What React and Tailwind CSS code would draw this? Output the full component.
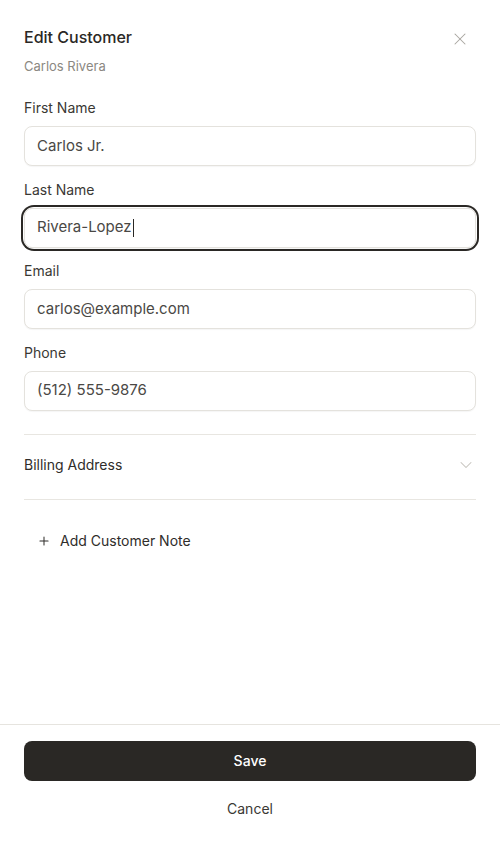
import { X, ChevronDown, Plus } from "lucide-react";

const Field = ({ label, value, focused }) => (
  <div className="flex flex-col gap-2">
    <label className="text-sm leading-5 text-[#3a3834]">{label}</label>
    <div
      className={
        focused
          ? "rounded-[10px] ring-2 ring-[#2a2825] ring-offset-[1px]"
          : ""
      }
    >
      <div className="flex h-10 items-center rounded-lg border border-[#e4e2dd] bg-white px-3 text-[15px] text-[#4a4845] shadow-[0_1px_1px_rgba(0,0,0,0.04)]">
        <span>{value}</span>
        {focused && <span className="ml-px h-[18px] w-px bg-[#2a2825]" />}
      </div>
    </div>
  </div>
);

export default function App() {
  return (
    <div
      className="flex min-h-screen flex-col bg-white"
      style={{ fontFamily: "Inter, 'Liberation Sans', sans-serif" }}
    >
      <div className="flex-1 px-6 pt-[27px]">
        <div className="flex items-start justify-between">
          <div>
            <h2 className="text-base font-medium leading-5 text-[#2a2825]">
              Edit Customer
            </h2>
            <p className="mt-[11px] text-[13px] leading-4 text-[#8b8882]">
              Carlos Rivera
            </p>
          </div>
          <button className="mt-[2px] mr-[6px] text-[#a8a6a0]">
            <X size={20} strokeWidth={1.25} />
          </button>
        </div>

        <div className="mt-6 flex flex-col gap-[13.5px]">
          <Field label="First Name" value="Carlos Jr." />
          <Field label="Last Name" value="Rivera-Lopez" focused />
          <Field label="Email" value="carlos@example.com" />
          <Field label="Phone" value="(512) 555-9876" />
        </div>

        <div className="mt-[23px] border-y border-[#e8e6e1]">
          <button className="flex h-16 w-full items-center justify-between pb-1 text-sm text-[#2f2d2a]">
            <span>Billing Address</span>
            <ChevronDown size={20} strokeWidth={1.25} className="text-[#c4c2bc]" />
          </button>
        </div>

        <button className="mt-[31px] flex items-center gap-[9px] px-[13px] text-sm text-[#2f2d2a]">
          <Plus size={14} strokeWidth={1.75} />
          <span>Add Customer Note</span>
        </button>
      </div>

      <div className="border-t border-[#e6e4df] px-6 pt-4 pb-4">
        <button className="flex h-10 w-full items-center justify-center rounded-lg bg-[#2a2825] text-sm font-medium text-white">
          Save
        </button>
        <button className="mt-2 flex h-10 w-full items-center justify-center text-sm text-[#3a3834]">
          Cancel
        </button>
      </div>
    </div>
  );
}
